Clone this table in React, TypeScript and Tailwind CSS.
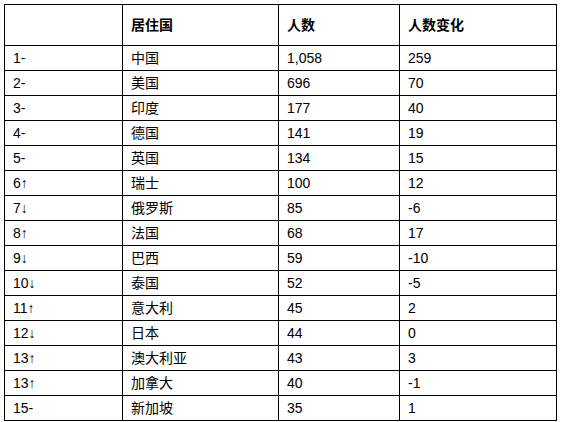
import React from "react";

const rows: [string, string, string, string][] = [
  ["1-", "中国", "1,058", "259"],
  ["2-", "美国", "696", "70"],
  ["3-", "印度", "177", "40"],
  ["4-", "德国", "141", "19"],
  ["5-", "英国", "134", "15"],
  ["6↑", "瑞士", "100", "12"],
  ["7↓", "俄罗斯", "85", "-6"],
  ["8↑", "法国", "68", "17"],
  ["9↓", "巴西", "59", "-10"],
  ["10↓", "泰国", "52", "-5"],
  ["11↑", "意大利", "45", "2"],
  ["12↓", "日本", "44", "0"],
  ["13↑", "澳大利亚", "43", "3"],
  ["13↑", "加拿大", "40", "-1"],
  ["15-", "新加坡", "35", "1"],
];

const cell = "border-l border-t border-black pl-2 flex items-center whitespace-nowrap";

export default function App() {
  return (
    <div
      className="w-[563px] h-[422px] overflow-hidden bg-white text-black"
      style={{ fontFamily: '"Liberation Sans", "Noto Sans CJK SC", sans-serif' }}
    >
      <div className="ml-[4px] mt-[4px] w-[553px] grid grid-cols-[118px_156px_121px_157px] border-r border-b border-black text-[14px] leading-none">
        <div className={`${cell} h-[41px]`} />
        <div className={`${cell} h-[41px] font-bold`}>居住国</div>
        <div className={`${cell} h-[41px] font-bold`}>人数</div>
        <div className={`${cell} h-[41px] font-bold`}>人数变化</div>
        {rows.map((r, i) => (
          <React.Fragment key={i}>
            {r.map((v, j) => (
              <div key={j} className={`${cell} h-[25px]`}>
                {v}
              </div>
            ))}
          </React.Fragment>
        ))}
      </div>
    </div>
  );
}
